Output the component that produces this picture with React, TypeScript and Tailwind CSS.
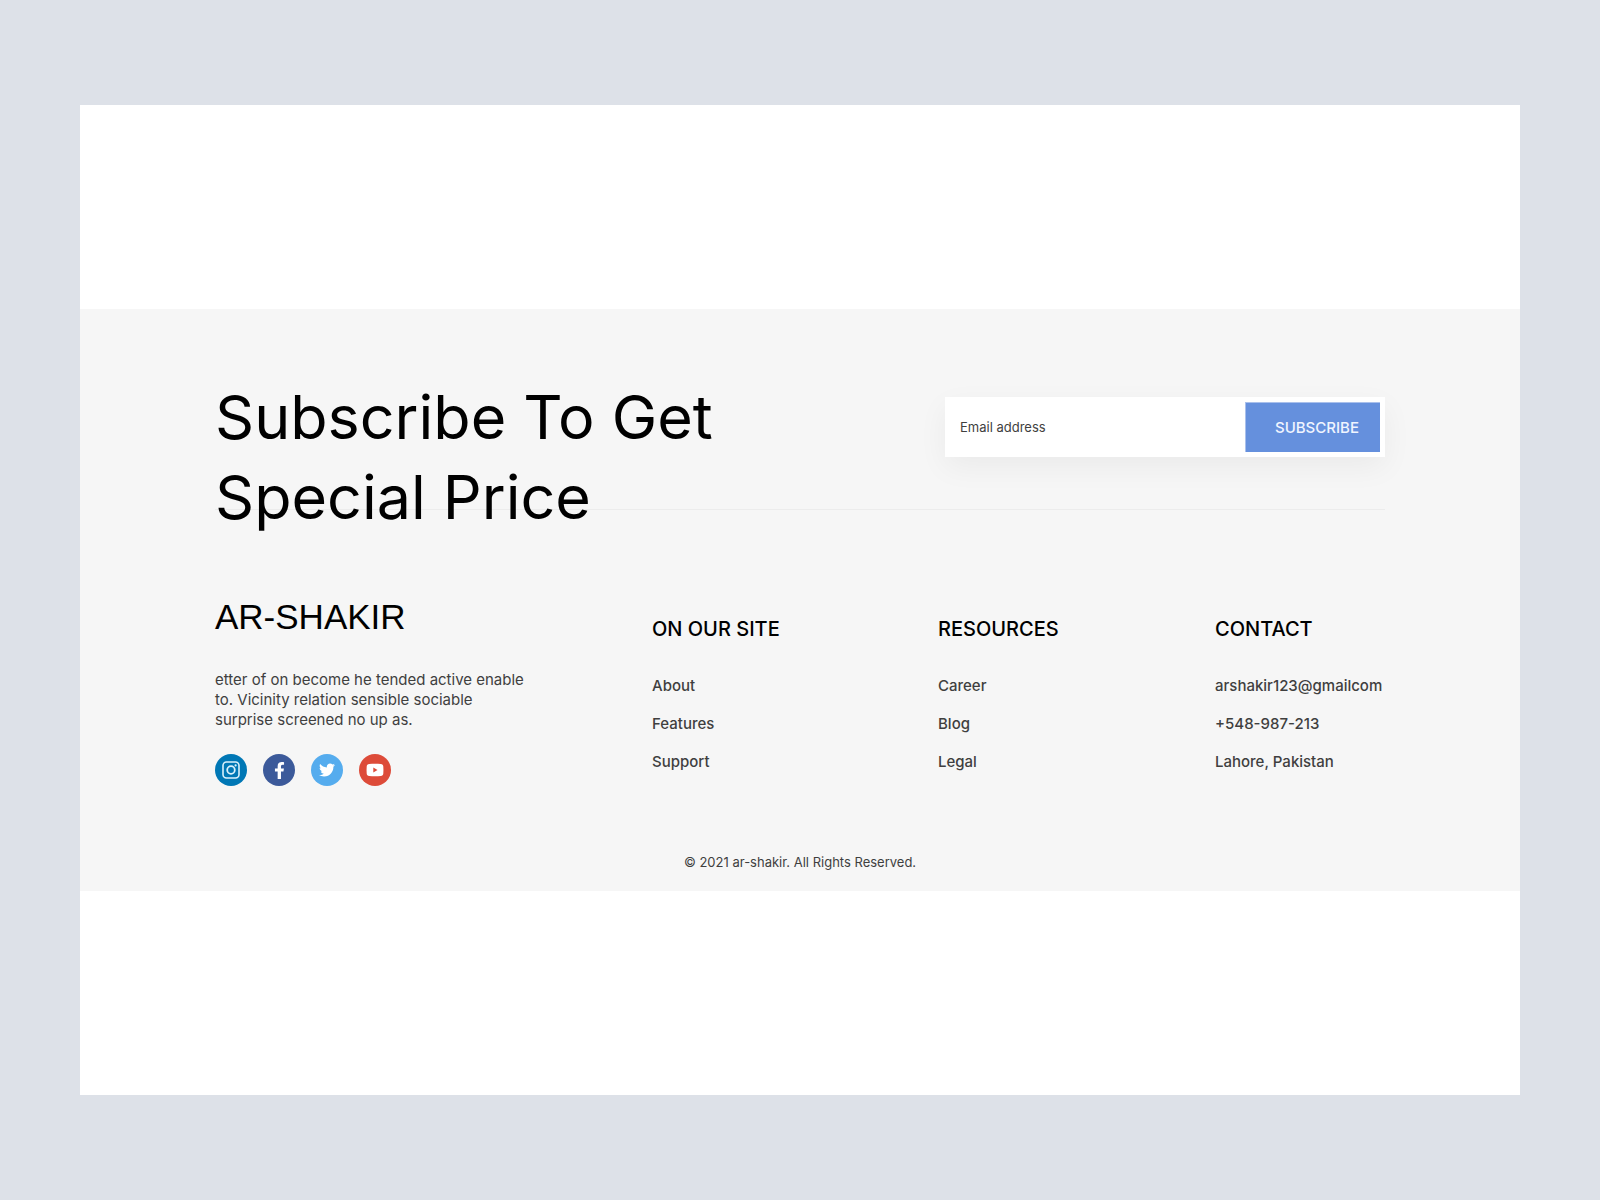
import type { ReactNode } from "react";
import { FaFacebookF, FaTwitter } from "react-icons/fa";

const COLUMNS = [
  {
    title: "ON OUR SITE",
    links: [
      { label: "About", href: "#about" },
      { label: "Features", href: "#features" },
      { label: "Support", href: "#support" },
    ],
  },
  {
    title: "RESOURCES",
    links: [
      { label: "Career", href: "#career" },
      { label: "Blog", href: "#blog" },
      { label: "Legal", href: "#legal" },
    ],
  },
  {
    title: "CONTACT",
    links: [
      { label: "arshakir123@gmailcom", href: "mailto:arshakir123@gmailcom" },
      { label: "+548-987-213", href: "tel:+548987213" },
      { label: "Lahore, Pakistan", href: "#map" },
    ],
  },
];

export default function App() {
  return (
    <div className="min-h-screen bg-[#dde1e8] px-[5%] py-[105px] font-['Inter',sans-serif]">
      <main className="bg-white py-[204px]">
        <footer className="bg-[#f6f6f6] px-[135px] pt-[68px] pb-[19px]">
          <SubscribeRow />

          <div className="mt-[87px] grid grid-cols-[437fr_286fr_277fr_170fr]">
            <Brand />
            {COLUMNS.map((c) => (
              <LinkColumn key={c.title} title={c.title} links={c.links} />
            ))}
          </div>

          <p className="mt-[66px] text-center text-[13px] leading-5 text-[#3f3f3f]">
            © 2021 ar-shakir. All Rights Reserved.
          </p>
        </footer>
      </main>
    </div>
  );
}

// The heading is taller than the row, its second line runs over the divider.
function SubscribeRow() {
  return (
    <div className="flex h-[133px] items-start justify-between border-b border-[#ececec]">
      <h1 className="text-[61px] leading-[80px] font-normal text-black">
        Subscribe To Get
        <br />
        Special Price
      </h1>

      <form
        onSubmit={(e) => e.preventDefault()}
        className="mt-5 flex h-[60px] w-[440px] bg-white p-[5px] shadow-[0_10px_30px_rgba(0,0,0,0.05)]"
      >
        <input
          type="email"
          aria-label="Email address"
          placeholder="Email address"
          className="min-w-0 flex-1 px-2.5 pt-0.5 text-[13px] text-[#3f3f3f] outline-none placeholder:text-[#3f3f3f]"
        />
        <button
          type="submit"
          className="w-[135px] border-t border-l border-[#a9c0ec] bg-[#6590dd] pt-0.5 pl-2 text-[15px] font-medium text-[#f0f5ff]"
        >
          SUBSCRIBE
        </button>
      </form>
    </div>
  );
}

function Brand() {
  return (
    <section>
      <h2 className="font-['Liberation_Sans',sans-serif] text-[35px] leading-10 text-black">
        AR-SHAKIR
      </h2>
      <p className="mt-[33px] w-[315px] text-[15px] leading-5 text-[#3f3f3f]">
        etter of on become he tended active enable to. Vicinity relation sensible sociable surprise
        screened no up as.
      </p>
      <div className="mt-6 flex gap-4">
        <Social label="Instagram" className="bg-[#0077b5]">
          <InstagramIcon />
        </Social>
        <Social label="Facebook" className="bg-[#3c5a9a]">
          <FaFacebookF size={17} />
        </Social>
        <Social label="Twitter" className="bg-[#55acee]">
          <FaTwitter size={16} />
        </Social>
        <Social label="YouTube" className="bg-[#dd4b39]">
          <YoutubeIcon />
        </Social>
      </div>
    </section>
  );
}

function Social({
  label,
  className,
  children,
}: {
  label: string;
  className: string;
  children: ReactNode;
}) {
  return (
    <a
      href={`#${label.toLowerCase()}`}
      aria-label={label}
      className={`flex size-8 items-center justify-center rounded-full text-white ${className}`}
    >
      {children}
    </a>
  );
}

function InstagramIcon() {
  return (
    <svg width="18" height="18" viewBox="0 0 18 18" fill="none" stroke="#d9f1fb">
      <rect x="1" y="1" width="16" height="16" rx="3.5" strokeWidth="1.6" />
      <circle cx="9" cy="9" r="3.8" strokeWidth="1.8" />
      <circle cx="13.6" cy="4.4" r="1.1" fill="#d9f1fb" stroke="none" />
    </svg>
  );
}

function YoutubeIcon() {
  return (
    <svg width="18" height="14" viewBox="0 0 18 14" fill="#fff">
      <path
        fillRule="evenodd"
        d="M3.2 1.1C7 0.7 11 0.7 14.8 1.1C16.4 1.3 17.2 2 17.3 3.6C17.5 5.9 17.5 8.1 17.3 10.4C17.2 12 16.4 12.7 14.8 12.9C11 13.3 7 13.3 3.2 12.9C1.6 12.7 0.8 12 0.7 10.4C0.5 8.1 0.5 5.9 0.7 3.6C0.8 2 1.6 1.3 3.2 1.1ZM7.3 4.4V9.6L11.5 7Z"
      />
    </svg>
  );
}

function LinkColumn({
  title,
  links,
}: {
  title: string;
  links: { label: string; href: string }[];
}) {
  return (
    <nav aria-label={title} className="pt-[18px]">
      <h3 className="text-xl font-medium text-black">{title}</h3>
      <ul className="mt-[31px] space-y-3.5">
        {links.map((l) => (
          <li key={l.label} className="text-[15px] leading-6 font-medium">
            <a href={l.href} className="whitespace-nowrap text-[#3f3f3f]">
              {l.label}
            </a>
          </li>
        ))}
      </ul>
    </nav>
  );
}
